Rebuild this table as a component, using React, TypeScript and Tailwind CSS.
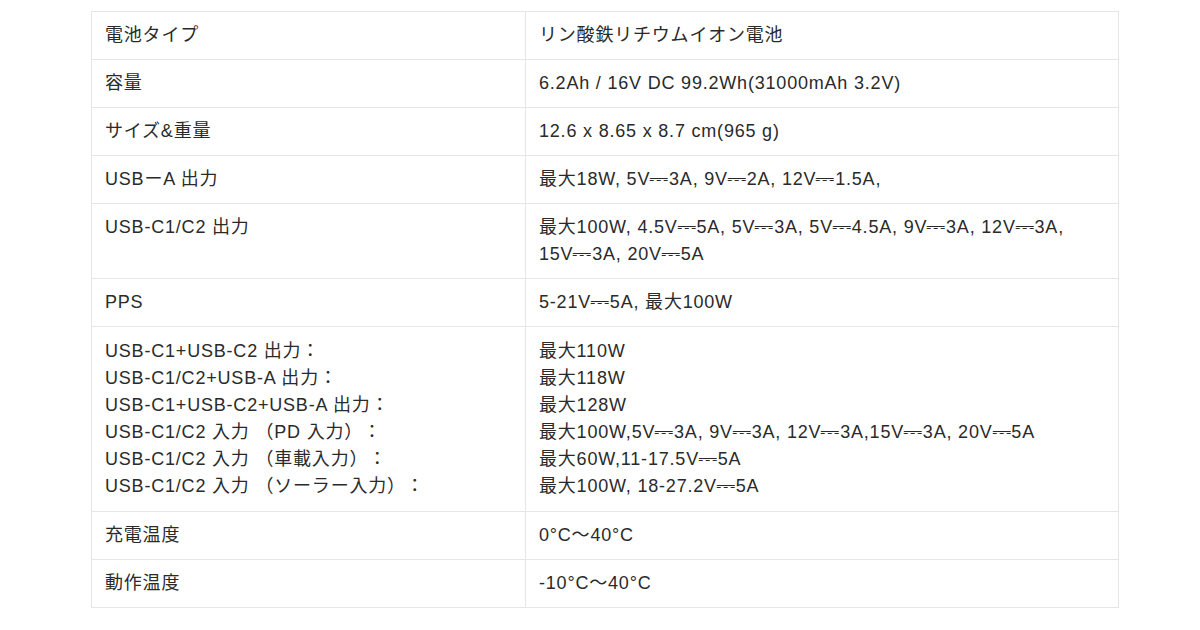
const DC = '⎓'

type Row = { label: string[]; value: string[]; tall?: boolean }

const rows: Row[] = [
  { label: ['電池タイプ'], value: ['リン酸鉄リチウムイオン電池'] },
  { label: ['容量'], value: ['6.2Ah / 16V DC 99.2Wh(31000mAh 3.2V)'] },
  { label: ['サイズ&重量'], value: ['12.6 x 8.65 x 8.7 cm(965 g)'] },
  { label: ['USBーA 出力'], value: [`最大18W, 5V${DC}3A, 9V${DC}2A, 12V${DC}1.5A,`] },
  {
    label: ['USB-C1/C2 出力'],
    value: [
      `最大100W, 4.5V${DC}5A, 5V${DC}3A, 5V${DC}4.5A, 9V${DC}3A, 12V${DC}3A,`,
      `15V${DC}3A, 20V${DC}5A`,
    ],
  },
  { label: ['PPS'], value: [`5-21V${DC}5A, 最大100W`] },
  {
    label: [
      'USB-C1+USB-C2 出力：',
      'USB-C1/C2+USB-A 出力：',
      'USB-C1+USB-C2+USB-A 出力：',
      'USB-C1/C2 入力 （PD 入力）：',
      'USB-C1/C2 入力 （車載入力）：',
      'USB-C1/C2 入力 （ソーラー入力）：',
    ],
    value: [
      '最大110W',
      '最大118W',
      '最大128W',
      `最大100W,5V${DC}3A, 9V${DC}3A, 12V${DC}3A,15V${DC}3A, 20V${DC}5A`,
      `最大60W,11-17.5V${DC}5A`,
      `最大100W, 18-27.2V${DC}5A`,
    ],
    tall: true,
  },
  { label: ['充電温度'], value: ['0°C〜40°C'] },
  { label: ['動作温度'], value: ['-10°C〜40°C'] },
]

// direct-current sign is narrow in the fallback font, so widen it a little
function Line({ text }: { text: string }) {
  const parts = text.split(DC)
  return (
    <div className="whitespace-nowrap">
      {parts.map((p, i) => (
        <span key={i}>
          {i > 0 && <span className="inline-block mx-[2px] scale-x-[1.35]">{DC}</span>}
          {p}
        </span>
      ))}
    </div>
  )
}

export default function App() {
  return (
    <div className="w-[1200px] h-[630px] bg-white pt-[11px] pl-[91px] font-['Liberation_Sans','Noto_Sans_CJK_JP','DejaVu_Sans',sans-serif] text-[18px] leading-[27px] tracking-[0.8px] text-[#2a2a2a] [text-spacing-trim:space-all]">
      <table className="w-[1028px] table-fixed border-collapse border border-[#e6e6e3]">
        <tbody>
          {rows.map((r, i) => (
            <tr key={i} className="border-t border-[#e6e6e3]">
              <td
                className={`w-[434px] align-top border-r border-[#e6e6e3] px-[13px] ${
                  r.tall ? 'py-[11px]' : 'py-[10px]'
                }`}
              >
                {r.label.map((l, j) => (
                  <Line key={j} text={l} />
                ))}
              </td>
              <td className={`align-top px-[13px] ${r.tall ? 'py-[11px]' : 'py-[10px]'}`}>
                {r.value.map((l, j) => (
                  <Line key={j} text={l} />
                ))}
              </td>
            </tr>
          ))}
        </tbody>
      </table>
    </div>
  )
}
